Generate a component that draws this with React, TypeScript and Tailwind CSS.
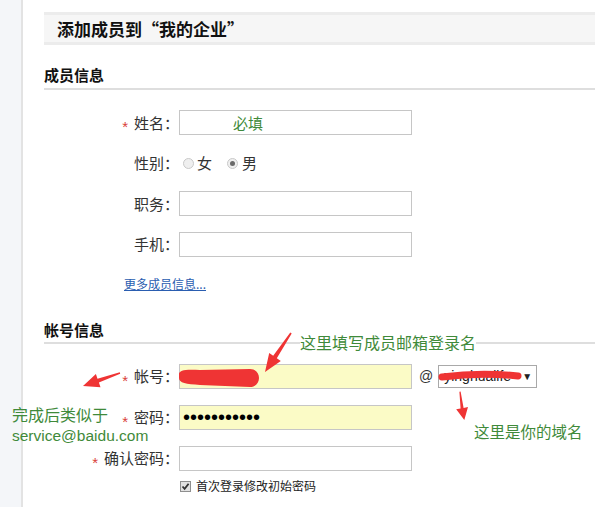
import type { ReactNode } from 'react';

function Row({ label, required, children }: { label: string; required?: boolean; children: ReactNode }) {
  return (
    <div className="flex items-center h-[25px]">
      <label className="w-[135px] shrink-0 text-right text-[15px] leading-[20px] text-[#333]">
        {required && (
          <span className="inline-block align-middle h-[14px] leading-[20px] mr-[6px] text-[15px] text-[#d9403a] font-['Liberation_Sans',sans-serif]">
            *
          </span>
        )}
        {label}：
      </label>
      {children}
    </div>
  );
}

function Radio({ checked }: { checked?: boolean }) {
  return (
    <span className="w-[11px] h-[11px] rounded-full border border-[#c9c9c9] bg-[#efefef] flex items-center justify-center">
      {checked && <span className="w-[5px] h-[5px] rounded-full bg-[#6a6a6a]" />}
    </span>
  );
}

export default function App() {
  return (
    <div className="relative w-[595px] h-[507px] overflow-hidden bg-white flex font-['Noto_Sans_CJK_SC',sans-serif]">
      <aside className="w-[23px] shrink-0 bg-[#f4f6f9] border-r-2 border-[#e3e3e3]" />

      <main className="flex-1 pl-[21px] pt-[12px]">
        <div className="h-[33px] flex items-center pl-[13px] bg-[#f6f6f6] border-y-[3px] border-[#ececec] text-[17px] font-bold text-[#111]">
          添加成员到“我的企业”
        </div>

        {/* 成员信息 */}
        <h2 className="mt-[20px] text-[15px] leading-[20px] font-bold text-[#111] pb-[3px] border-b-2 border-[#dedede]">
          成员信息
        </h2>
        <div className="mt-[20px] flex flex-col gap-[15.5px]">
          <Row label="姓名" required>
            <input
              className="w-[233px] h-[25px] border border-[#c6c6c6] pl-[53px] text-[15px] outline-none placeholder:text-[#3f8a3a]"
              placeholder="必填"
            />
          </Row>
          <Row label="性别">
            <div className="flex items-center ml-[4px] text-[15px] text-[#333]">
              <Radio />
              <span className="ml-[3px]">女</span>
              <span className="ml-[15px]">
                <Radio checked />
              </span>
              <span className="ml-[4px]">男</span>
            </div>
          </Row>
          <Row label="职务">
            <input className="w-[233px] h-[25px] border border-[#c6c6c6] px-1 text-[14px] outline-none" />
          </Row>
          <Row label="手机">
            <input className="w-[233px] h-[25px] border border-[#c6c6c6] px-1 text-[14px] outline-none" />
          </Row>
        </div>
        <a href="#" className="block w-fit mt-[19px] ml-[80px] text-[12px] leading-[16px] text-[#2a5db0] underline">
          更多成员信息...
        </a>

        {/* 帐号信息 */}
        <h2 className="mt-[28px] text-[15px] leading-[20px] font-bold text-[#111] pb-[2px] border-b-2 border-[#dedede]">
          帐号信息
        </h2>
        <div className="mt-[20px] flex flex-col gap-[16px]">
          <Row label="帐号" required>
            <input className="w-[233px] h-[25px] border border-[#c6c6c6] bg-[#fbfbc6] px-1 text-[14px] outline-none" />
            <span className="ml-[7px] text-[14px] text-[#333] font-['Liberation_Sans',sans-serif]">@</span>
            <div className="ml-[5px] w-[99px] h-[23px] border border-[#a9a9a9] flex items-center justify-between pl-[5px] pr-[4px] text-[14px] text-[#222] font-['Liberation_Sans',sans-serif]">
              <span>yinghualife</span>
              <span className="text-[10px]">▼</span>
            </div>
          </Row>
          <Row label="密码" required>
            <input
              type="password"
              readOnly
              defaultValue="12345678901"
              className="w-[233px] h-[25px] border border-[#c6c6c6] bg-[#fbfbc6] pl-[3px] text-[20px] text-black outline-none font-['Liberation_Sans',sans-serif]"
            />
          </Row>
          <Row label="确认密码" required>
            <input type="password" className="w-[233px] h-[25px] border border-[#c6c6c6] px-1 text-[14px] outline-none" />
          </Row>
        </div>
        <label className="mt-[9px] ml-[136px] flex items-center gap-[5px] h-[13px] text-[12px] text-[#222]">
          <span className="w-[11px] h-[11px] border border-[#8f8f8f] bg-[#e2e2e2] flex items-center justify-center">
            <svg width="9" height="9" viewBox="0 0 9 9">
              <path d="M1.5 4.5 L3.6 6.8 L7.6 1.8" fill="none" stroke="#333" strokeWidth="1.8" />
            </svg>
          </span>
          首次登录修改初始密码
        </label>
      </main>

      {/* red marks drawn over the screenshot */}
      <svg className="absolute inset-0 pointer-events-none" width="595" height="507" viewBox="0 0 595 507">
        <path
          d="M179 374 C179 370 186 369 200 370 L250 369 C262 369 262 387 250 387 L200 385 C186 384 179 383 179 378 Z"
          fill="#ef3434"
        />
        <path d="M442 377 Q480 372 518 376" fill="none" stroke="#ef3434" strokeWidth="7" strokeLinecap="round" />
        <polygon
          points="83,386 100.5,387.3 98.9,382.6 120.2,373.7 119.8,372.3 97.5,378.8 95.9,374.1"
          fill="#ef3434"
        />
        <polygon
          points="265,372 280.8,360.9 276.8,358.2 291.7,333.4 290.3,332.6 273.2,355.8 269.2,353.1"
          fill="#ef3434"
        />
        <polygon
          points="464.3,420 468,407.1 463.6,407.9 460.6,391.6 459.4,391.8 460.6,408.5 456.2,409.3"
          fill="#ef3434"
        />
      </svg>

      <span className="absolute left-[300px] top-[333px] bg-white text-[16px] leading-[18px] text-[#3f8a3a]">
        这里填写成员邮箱登录名
      </span>
      <span className="absolute left-[12px] top-[405px] text-[16px] leading-[18px] text-[#3f8a3a]">完成后类似于</span>
      <span className="absolute left-[12px] top-[428px] text-[15.5px] leading-[16px] text-[#3f8a3a] font-['Liberation_Sans',sans-serif]">
        service@baidu.com
      </span>
      <span className="absolute left-[474px] top-[422px] text-[15.5px] leading-[18px] text-[#3f8a3a]">这里是你的域名</span>
    </div>
  );
}
